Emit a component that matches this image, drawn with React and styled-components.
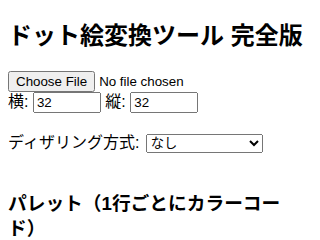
import React from 'react'
import styled, { createGlobalStyle } from 'styled-components'

const GlobalStyle = createGlobalStyle`
	body {
		margin: 8px;
		font-family: 'Liberation Sans', 'Noto Sans CJK JP', sans-serif;
		font-size: 16px;
		color: #000;
		background: #fff;
		text-spacing-trim: space-all;
	}
`
const Title = styled.h2`
	font-size: 24px;
	margin: 8px 0 20px;
`
const Controls = styled.div`
	line-height: 18px;
`
const FileInput = styled.input`
	font-family: 'Liberation Sans', sans-serif;
	font-size: 13.33px;
`
const SizeInput = styled.input`
	width: 60px;
	font-family: 'Liberation Sans', sans-serif;
	font-size: 13.33px;
`
const Row = styled.p`
	margin: 16px 0;
`
const Select = styled.select`
	width: 117px;
	margin-left: 2px;
	font-family: 'Liberation Sans', 'Noto Sans CJK JP', sans-serif;
	font-size: 13.33px;
`
const SubTitle = styled.h3`
	font-size: 18.72px;
	margin: 38px 0 0;
	line-height: 25px;
	text-spacing-trim: space-all;
`

const App = () => {
	return (
		<>
			<GlobalStyle />
			<Title>ドット絵変換ツール 完全版</Title>
			<Controls>
				<FileInput type='file' />
				<br />
				横: <SizeInput type='number' defaultValue={32} /> 縦:{' '}
				<SizeInput type='number' defaultValue={32} />
			</Controls>
			<Row>
				ディザリング方式:{' '}
				<Select>
					<option>なし</option>
					<option>Floyd-Steinberg</option>
				</Select>
			</Row>
			<SubTitle>パレット（1行ごとにカラーコード）</SubTitle>
		</>
	)
}
export default App
